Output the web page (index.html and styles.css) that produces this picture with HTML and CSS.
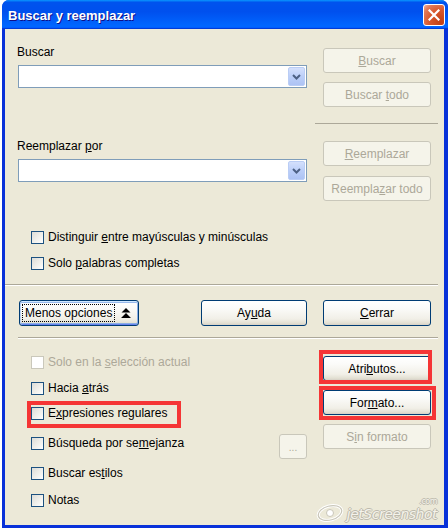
FILE: index.html
```html
<!DOCTYPE html>
<html lang="es">
<head>
<meta charset="utf-8">
<title>Buscar y reemplazar</title>
<link rel="stylesheet" href="styles.css">
</head>
<body>
<div class="window">
  <div class="titlebar">
    <span class="title">Buscar y reemplazar</span>
    <span class="close"><svg width="12" height="12" viewBox="0 0 12 12"><path d="M1.5 1.5 L10.5 10.5 M10.5 1.5 L1.5 10.5" stroke="#fff" stroke-width="2.2" stroke-linecap="square"/></svg></span>
  </div>
  <div class="body">
    <div class="section top">
      <div class="col-left">
        <div class="label">Buscar</div>
        <div class="combo"><span class="drop"><svg width="9" height="6" viewBox="0 0 9 6"><path d="M1 1 L4.5 4.5 L8 1" fill="none" stroke="#4d6185" stroke-width="2"/></svg></span></div>
        <div class="label label2">Reemplazar <u>p</u>or</div>
        <div class="combo"><span class="drop"><svg width="9" height="6" viewBox="0 0 9 6"><path d="M1 1 L4.5 4.5 L8 1" fill="none" stroke="#4d6185" stroke-width="2"/></svg></span></div>
        <div class="check c-dist"><span class="box"></span><span>Distinguir <u>e</u>ntre mayúsculas y minúsculas</span></div>
        <div class="check c-solo"><span class="box"></span><span>Solo <u>p</u>alabras completas</span></div>
      </div>
      <div class="col-right">
        <div class="btn dis"><span><u>B</u>uscar</span></div>
        <div class="btn dis b-gap"><span>Buscar <u>t</u>odo</span></div>
        <div class="rsep"></div>
        <div class="btn dis b-repl"><span><u>R</u>eemplazar</span></div>
        <div class="btn dis b-gap2"><span>Reempla<u>z</u>ar todo</span></div>
      </div>
    </div>
    <div class="sep sep1"></div>
    <div class="actions">
      <div class="btn focus b-menos"><span class="focusrect">Menos opciones</span><svg class="arrows" width="10" height="11" viewBox="0 0 10 11"><path d="M5 0 L9.5 4.5 L0.5 4.5 Z M5 5 L10 10 L0 10 Z" fill="#000"/></svg></div>
      <div class="btn b-ayuda"><span>Ay<u>u</u>da</span></div>
      <div class="btn b-cerrar"><span><u>C</u>errar</span></div>
    </div>
    <div class="sep sep2"></div>
    <div class="section bottom">
      <div class="col-left">
        <div class="check disabled"><span class="box"></span><span>Solo en la <u>s</u>elección actual</span></div>
        <div class="check r2"><span class="box"></span><span>Hacia <u>a</u>trás</span></div>
        <div class="check r3 hl hl-expr"><span class="box"></span><span>E<u>x</u>presiones regulares</span></div>
        <div class="row4">
          <div class="check"><span class="box"></span><span>Búsqueda por se<u>m</u>ejanza</span></div>
          <div class="btn dis small"><span>...</span></div>
        </div>
        <div class="check r5"><span class="box"></span><span>Buscar es<u>t</u>ilos</span></div>
        <div class="check r6"><span class="box"></span><span>Notas</span></div>
      </div>
      <div class="col-right">
        <div class="btn hl hl-attr"><span>Atri<u>b</u>utos...</span></div>
        <div class="btn b-gap hl hl-form"><span>For<u>m</u>ato...</span></div>
        <div class="btn dis b-gap"><span>S<u>i</u>n formato</span></div>
      </div>
    </div>
    <div class="watermark">
      <svg width="28" height="18" viewBox="0 0 28 18"><ellipse cx="14" cy="9" rx="12" ry="7" fill="none" stroke="#fff" stroke-width="3" transform="rotate(-15 14 9)"/><ellipse cx="14" cy="9" rx="12" ry="7" fill="none" stroke="#c9c6b8" stroke-width="1.2" transform="rotate(-15 14 9)"/><circle cx="14" cy="9" r="3.5" fill="#fff" stroke="#c9c6b8" stroke-width="1"/></svg>
      <span class="wm-text">jetScreenshot<span class="wm-com">.com</span></span>
    </div>
  </div>
</div>
</body>
</html>
```

FILE: styles.css
```css
*, *::before, *::after { box-sizing: border-box; }
html, body { margin: 0; padding: 0; background: #fff; }
body {
  font-family: "Liberation Sans", Tahoma, Arial, sans-serif;
  font-size: 12px;
  color: #000;
}
u { text-decoration: underline; text-underline-offset: 1px; }

.window {
  margin-left: 2px;
  width: 446px;
  height: 528px;
  background: #0831d9;
  border-radius: 7px 7px 0 0;
  display: flex;
  flex-direction: column;
}
.titlebar {
  height: 29px;
  flex: none;
  border-radius: 7px 7px 0 0;
  background: linear-gradient(180deg, #0997ff 0%, #0053ee 8%, #0050ee 40%, #0066ff 88%, #0066ff 93%, #005bff 95%, #003dd7 96%, #003dd7 100%);
  display: flex;
  align-items: center;
  padding: 0 3px 0 6px;
}
.title {
  flex: 1;
  font-weight: bold;
  font-size: 13px;
  line-height: 15px;
  margin-top: 2px;
  color: #fff;
  text-shadow: 1px 1px 0 #0f1089;
}
.close {
  width: 22px;
  height: 22px;
  margin-top: 1px;
  border: 1px solid #fff;
  border-radius: 3px;
  background: radial-gradient(circle at 85% 85%, #c24014 0%, #d9582d 50%, #e27b5a 80%, #f2b49e 100%);
  display: flex;
  align-items: center;
  justify-content: center;
}

.body {
  flex: 1;
  margin: 0 4px 3px 3px;
  background: #ece9d8;
  position: relative;
}

.section {
  display: grid;
  grid-template-columns: 290px 108px;
  column-gap: 16px;
  padding-left: 12px;
}
.top { height: 255px; }
.top .col-left { padding-top: 16px; }
.top .col-right { padding-top: 19px; }

.label { line-height: 14px; height: 14px; }
.label2 { margin-top: 51px; }
.combo {
  margin-top: 6px;
  margin-left: 1px;
  width: 289px;
  height: 23px;
  border: 1px solid #7f9db9;
  background: #fff;
  padding: 1px;
  display: flex;
  justify-content: flex-end;
}
.drop {
  width: 17px;
  height: 19px;
  border: 1px solid #bacdf5;
  border-radius: 2px;
  background: linear-gradient(180deg, #d4e0fc 0%, #bccff9 50%, #adc3f4 100%);
  display: flex;
  align-items: center;
  justify-content: center;
}

.check {
  display: flex;
  align-items: center;
  width: max-content;
  height: 13px;
  line-height: 13px;
  margin-left: 14px;
  gap: 4px;
  white-space: nowrap;
}
.box {
  width: 13px;
  height: 13px;
  flex: none;
  border: 1px solid #1c5180;
  background: linear-gradient(135deg, #dcdcd7 0%, #f0f0ec 55%, #fff 100%);
}
.check.disabled { color: #aca899; }
.check.disabled .box { border-color: #cac8bb; background: #fff; }
.c-dist { margin-top: 49px; }
.c-solo { margin-top: 13px; }

.btn {
  height: 25px;
  width: 108px;
  border: 1px solid #003c74;
  border-radius: 3px;
  background: linear-gradient(180deg, #ffffff 0%, #fbfbf9 30%, #f1efe7 75%, #e3e0d3 92%, #d6d0c5 100%);
  display: flex;
  align-items: center;
  justify-content: center;
  white-space: nowrap;
}
.btn.dis {
  border-color: #c9c7ba;
  background: #f5f4ea;
  color: #aca899;
}
.b-gap { margin-top: 9px; }
.b-gap2 { margin-top: 10px; }
.b-repl { margin-top: 17px; }
.rsep {
  margin: 16px -7px 0 -8px;
  height: 1px;
  background: #aca899;
}

.sep {
  height: 2px;
  border-top: 1px solid #aca899;
  border-bottom: 1px solid #fff;
}
.sep1 { margin-right: 6px; }
.sep2 { margin-top: 11px; margin-left: 13px; width: 420px; }

.actions {
  margin-top: 14px;
  display: flex;
  padding-left: 14px;
}
.actions .btn { height: 26px; }
.b-menos {
  width: 120px;
  justify-content: flex-start;
  padding-left: 3px;
  box-shadow: inset 0 1px 0 #cee7ff, inset 0 2px 0 #98b8ea, inset 1px 0 0 #bcd4f6, inset -1px 0 0 #89ade4, inset 0 -1px 0 #6982ee, inset 0 -2px 0 #89ade4;
}
.focusrect {
  outline: 1px dotted #000;
  padding: 0 2px;
  line-height: 16px;
}
.arrows { margin-left: 7px; margin-top: 1px; }
.b-ayuda { width: 106px; margin-left: 62px; }
.b-cerrar { margin-left: 16px; }

.bottom .col-left { padding-top: 17px; }
.bottom .col-right { padding-top: 17px; }
.r2 { margin-top: 13px; }
.r3 { margin-top: 12px; }
.row4 {
  margin-top: 17px;
  height: 13px;
  display: flex;
  justify-content: space-between;
  align-items: flex-start;
}
.btn.small {
  width: 28px;
  margin-top: -3px;
  align-items: flex-end;
  padding-bottom: 5px;
  font-size: 10px;
  line-height: 10px;
}
.r5 { margin-top: 17px; }
.r6 { margin-top: 14px; }

.hl { position: relative; }
.hl::after {
  content: "";
  position: absolute;
  border: 4px solid #f53535;
  pointer-events: none;
}
.hl-expr::after { left: -4px; top: -6px; width: 154px; height: 27px; }
.hl-attr::after { left: -5px; top: -7px; width: 113px; height: 34px; }
.hl-form::after { left: -5px; top: -5px; width: 117px; height: 34px; }

.watermark {
  position: absolute;
  right: 7px;
  bottom: 3px;
  display: flex;
  align-items: flex-end;
  gap: 3px;
}
.wm-text {
  position: relative;
  font-family: "DejaVu Sans", sans-serif;
  font-style: italic;
  font-size: 14px;
  line-height: 16px;
  color: #f4f2ea;
  text-shadow: 1px 0 0 #bdbaad, -1px 0 0 #bdbaad, 0 1px 0 #bdbaad, 0 -1px 0 #bdbaad;
  letter-spacing: -0.5px;
}
.wm-com {
  position: absolute;
  right: 0;
  top: -8px;
  font-size: 8px;
  line-height: 8px;
  font-style: normal;
}
```
